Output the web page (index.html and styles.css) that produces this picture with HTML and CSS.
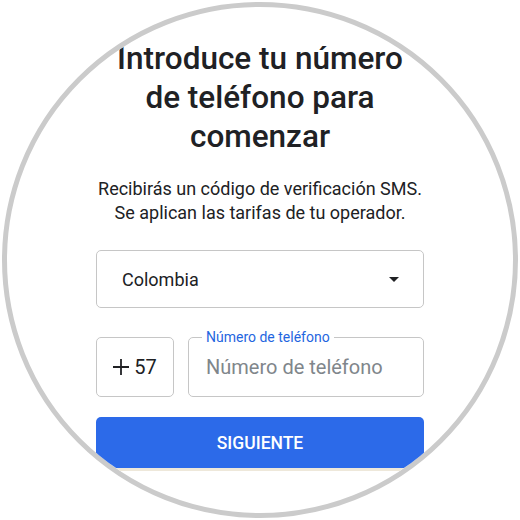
FILE: index.html
```html
<!DOCTYPE html>
<html lang="es">
<head>
  <meta charset="UTF-8">
  <title>Introduce tu número de teléfono</title>
  <link rel="stylesheet" href="styles.css">
</head>
<body>

<div class="frame">
  <div class="circle">
    <div class="content">
      <h1>Introduce tu número<br>de teléfono para<br>comenzar</h1>
      <p class="subtitle">Recibirás un código de verificación SMS.<br>Se aplican las tarifas de tu operador.</p>

      <div class="select">
        <span>Colombia</span>
        <span class="arrow"></span>
      </div>

      <div class="phone-row">
        <div class="code">
          <svg class="plus" width="16" height="16" viewBox="0 0 16 16">
            <path d="M0 8H16M8 0V16" stroke="#202124" stroke-width="1.8" fill="none"/>
          </svg>
          <span>57</span>
        </div>
        <div class="phone">
          <span class="label">Número de teléfono</span>
          <span class="placeholder">Número de teléfono</span>
        </div>
      </div>

      <button class="next">SIGUIENTE</button>
    </div>
  </div>
</div>

</body>
</html>
```

FILE: styles.css
```css
body {
  margin: 0;
  background: white;
  font-family: Roboto, "Liberation Sans", sans-serif;
  color: #202124;
}

.frame {
  width: 520px;
  height: 520px;
  padding: 2px;
  box-sizing: border-box;
}

.circle {
  width: 516px;
  height: 516px;
  box-sizing: border-box;
  border: 5px solid #cbcbcb;
  border-radius: 50%;
  overflow: hidden;
  display: flex;
  justify-content: center;
  padding-top: 32px;
}

.content {
  width: 328px;
}

h1 {
  margin: 0;
  font-size: 31.5px;
  font-weight: 500;
  line-height: 39px;
  text-align: center;
}

.subtitle {
  margin: 21px -10px 25px;
  font-size: 18px;
  line-height: 24px;
  text-align: center;
}

.select {
  height: 58px;
  box-sizing: border-box;
  border: 1px solid #c6c6c6;
  border-radius: 5px;
  display: flex;
  align-items: center;
  justify-content: space-between;
  padding: 0 24px 0 25px;
  font-size: 18px;
}

.arrow {
  width: 0;
  height: 0;
  border-left: 5px solid transparent;
  border-right: 5px solid transparent;
  border-top: 5px solid #202124;
}

.phone-row {
  display: flex;
  gap: 14px;
  margin-top: 29px;
}

.code, .phone {
  height: 60px;
  box-sizing: border-box;
  border: 1px solid #c6c6c6;
  border-radius: 5px;
  display: flex;
  align-items: center;
  font-size: 20px;
}

.code {
  width: 78px;
  justify-content: center;
  gap: 5px;
}

.phone {
  flex: 1;
  position: relative;
  padding-left: 17px;
}

.placeholder {
  color: #80868b;
}

.label {
  position: absolute;
  top: -10px;
  left: 13px;
  padding: 0 4px;
  background: white;
  font-size: 14px;
  line-height: 18px;
  color: #1f66e0;
}

.next {
  display: block;
  width: 100%;
  height: 51px;
  margin-top: 20px;
  border: none;
  border-radius: 5px;
  background: #2c6ae9;
  color: white;
  font-family: Roboto, "Liberation Sans", sans-serif;
  font-size: 17.5px;
  font-weight: 500;
  box-shadow: 0 3px 0 #eee8da;
}
```
